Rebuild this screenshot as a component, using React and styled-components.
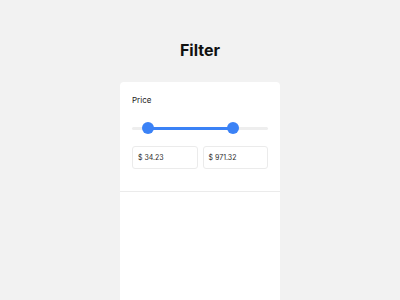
import React from "react";
import styled, { createGlobalStyle } from "styled-components";

const Global = createGlobalStyle`
  html, body { margin: 0; padding: 0; overflow: hidden; background: #f2f2f2; }
  body { font-family: Inter, "Noto Sans", "Liberation Sans", sans-serif; }
`;

const Page = styled.div`
  padding-top: 40px;
  display: flex;
  flex-direction: column;
  align-items: center;
`;

const Title = styled.h1`
  margin: 0;
  font-size: 16px;
  line-height: 20px;
  font-weight: 700;
  color: #111;
`;

const Card = styled.div`
  margin-top: 22px;
  width: 160px;
  height: 218px;
  background: #fff;
  border-radius: 4px 4px 0 0;
  display: flex;
  flex-direction: column;
`;

const Section = styled.div`
  padding: 13px 12px 22px;
  border-bottom: 1px solid #ebebeb;
`;

const Label = styled.div`
  font-size: 8px;
  line-height: 10px;
  color: #222;
`;

const Slider = styled.div`
  position: relative;
  margin-top: 17px;
  height: 12px;
  display: flex;
  align-items: center;
`;

const Track = styled.div`
  width: 100%;
  height: 3px;
  border-radius: 2px;
  background: #eeeeee;
`;

const Range = styled.div`
  position: absolute;
  top: 4.5px;
  height: 3px;
  background: #3b82f6;
`;

const Thumb = styled.div`
  position: absolute;
  top: 0;
  width: 12px;
  height: 12px;
  margin-left: -6px;
  border-radius: 50%;
  background: #3b82f6;
`;

const Inputs = styled.div`
  margin-top: 12px;
  display: grid;
  grid-template-columns: 1fr 1fr;
  gap: 5px;
`;

const Field = styled.div`
  height: 23px;
  box-sizing: border-box;
  border: 1px solid #ebebeb;
  border-radius: 3px;
  padding-left: 5px;
  display: flex;
  align-items: center;
  font-size: 7px;
  color: #2a2a2a;
`;

export default function App() {
  const lo = 16 / 136;
  const hi = 101 / 136;
  return (
    <>
      <Global />
      <Page>
        <Title>Filter</Title>
        <Card>
          <Section>
            <Label>Price</Label>
            <Slider>
              <Track />
              <Range style={{ left: `${lo * 100}%`, width: `${(hi - lo) * 100}%` }} />
              <Thumb style={{ left: `${lo * 100}%` }} />
              <Thumb style={{ left: `${hi * 100}%` }} />
            </Slider>
            <Inputs>
              <Field>$ 34.23</Field>
              <Field>$ 971.32</Field>
            </Inputs>
          </Section>
        </Card>
      </Page>
    </>
  );
}
